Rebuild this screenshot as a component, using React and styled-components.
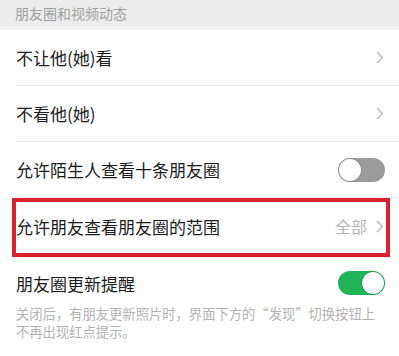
import React from 'react';
import styled, { createGlobalStyle } from 'styled-components';

const GlobalStyle = createGlobalStyle`
  body {
    margin: 0;
    background: #ffffff;
    font-family: "Noto Sans CJK SC", "Noto Sans", sans-serif;
  }
`;

const Page = styled.div`
  width: 399px;
  height: 356px;
  background: #ffffff;
  overflow: hidden;
`;

const SectionHeader = styled.div`
  height: 30px;
  box-sizing: border-box;
  padding: 0 15px;
  background: #ededed;
  border-bottom: 4px solid #f3f3f3;
  display: flex;
  align-items: center;
  color: #a0a0a0;
  font-size: 14px;
`;

const Row = styled.div`
  position: relative;
  height: 56px;
  box-sizing: border-box;
  margin-left: 16px;
  padding-right: 15px;
  display: flex;
  align-items: center;
  justify-content: space-between;
  border-bottom: ${(p) => (p.$divider ? '1px solid #ececec' : 'none')};
`;

const Label = styled.span`
  color: #1b1b1b;
  font-size: 17px;
`;

const Right = styled.div`
  display: flex;
  align-items: center;
  gap: 9px;
`;

const Value = styled.span`
  color: #b5b5b5;
  font-size: 16px;
`;

const Highlight = styled.div`
  position: absolute;
  top: 0;
  left: -4px;
  right: 9px;
  bottom: -3px;
  border: 4px solid #d7242f;
`;

const Toggle = styled.div`
  width: 47px;
  height: 24px;
  border-radius: 12px;
  box-sizing: border-box;
  background: ${(p) => (p.$on ? '#20b457' : '#9b9b9b')};
  position: relative;
  margin-right: -1px;
`;

const Knob = styled.div`
  position: absolute;
  top: 1px;
  left: ${(p) => (p.$on ? '24px' : '1px')};
  width: 22px;
  height: 22px;
  border-radius: 50%;
  background: #ffffff;
  box-shadow: 0 0 0 1px rgba(0, 0, 0, 0.12);
`;

const Block = styled.div`
  padding: 17px 15px 0 16px;
`;

const TitleRow = styled.div`
  height: 24px;
  display: flex;
  align-items: center;
  justify-content: space-between;
`;

const Desc = styled.p`
  margin: 10px 0 0;
  color: #b2b2b2;
  font-size: 13.3px;
  line-height: 18px;
`;

const Chevron = () => (
  <svg width="8" height="13" viewBox="0 0 8 13">
    <polyline points="1,1 6.5,6.5 1,12" fill="none" stroke="#bdbdbd" strokeWidth="1.5" />
  </svg>
);

const Switch = ({ on }) => (
  <Toggle $on={on}>
    <Knob $on={on} />
  </Toggle>
);

const App = () => (
  <Page>
    <GlobalStyle />
    <SectionHeader>朋友圈和视频动态</SectionHeader>
    <Row $divider>
      <Label>不让他(她)看</Label>
      <Chevron />
    </Row>
    <Row $divider>
      <Label>不看他(她)</Label>
      <Chevron />
    </Row>
    <Row $divider>
      <Label>允许陌生人查看十条朋友圈</Label>
      <Switch on={false} />
    </Row>
    <Row>
      <Label>允许朋友查看朋友圈的范围</Label>
      <Right>
        <Value>全部</Value>
        <Chevron />
      </Right>
      <Highlight />
    </Row>
    <Block>
      <TitleRow>
        <Label>朋友圈更新提醒</Label>
        <Switch on />
      </TitleRow>
      <Desc>
        关闭后，有朋友更新照片时，界面下方的“发现”切换按钮上
        <br />
        不再出现红点提示。
      </Desc>
    </Block>
  </Page>
);

export default App;
